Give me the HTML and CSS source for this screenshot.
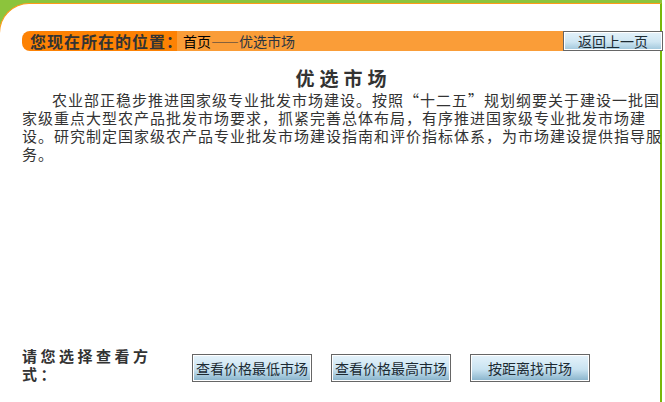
FILE: index.html
```html
<!DOCTYPE html>
<html lang="zh-CN">
<head>
<meta charset="utf-8">
<title>优选市场</title>
<link rel="stylesheet" href="styles.css">
</head>
<body>
<div class="frame">
  <div class="panel">
    <div class="crumb">
      <div class="crumb-label">您现在所在的位置：</div>
      <div class="crumb-path"><span class="home">首页</span>——优选市场</div>
      <button class="btn back">返回上一页</button>
    </div>
    <div class="intro">
      <h1 class="title">优选市场</h1>
      <p class="text">农业部正稳步推进国家级专业批发市场建设。按照<span class="q">“</span>十二五<span class="q">”</span>规划纲要关于建设一批国家级重点大型农产品批发市场要求，抓紧完善总体布局，有序推进国家级专业批发市场建设。研究制定国家级农产品专业批发市场建设指南和评价指标体系，为市场建设提供指导服务。</p>
    </div>
    <div class="choose">
      <div class="choose-label">请您选择查看方式：</div>
      <div class="choose-btns">
        <button class="btn big">查看价格最低市场</button>
        <button class="btn big">查看价格最高市场</button>
        <button class="btn big">按距离找市场</button>
      </div>
    </div>
  </div>
</div>
</body>
</html>
```
FILE: styles.css
```css
html, body {
  margin: 0;
  padding: 0;
  background: #ffffff;
  font-family: "Noto Sans CJK SC", "Noto Sans", sans-serif;
  color: #333333;
}
.frame {
  width: 662px;
  padding-top: 3px;
  background: #8cc43c;
  overflow: visible;
}
.panel {
  margin-left: -1px;
  width: 638px;
  min-height: 399px;
  padding-left: 22px;
  background: #ffffff;
  border-top: 1px solid #ff9a1a;
  border-left: 1px solid #ff9a1a;
  border-right: 2px solid #79b80a;
  border-top-left-radius: 30px;
}
.crumb {
  display: flex;
  width: 641px;
  height: 20px;
  margin-top: 27px;
}
.crumb-label {
  width: 147px;
  padding-left: 8px;
  background: #fd8204;
  border-radius: 8px 0 0 8px;
  font-weight: bold;
  font-size: 16px;
  letter-spacing: 1px;
  line-height: 20px;
  color: #333333;
  white-space: nowrap;
}
.crumb-path {
  flex: 1;
  padding-left: 6px;
  background: #fa9d38;
  font-size: 14px;
  line-height: 20px;
  color: #2b3440;
  white-space: nowrap;
}
.crumb-path .home {
  color: #000000;
}
.btn {
  font-family: "Noto Sans CJK SC", "Noto Sans", sans-serif;
  border: 1px solid #666666;
  box-shadow: inset 0 0 0 1px #ffffff;
  background: linear-gradient(#e4f2fa, #cfe6f2 55%, #9fc6db);
  color: #1c2a33;
  padding: 0;
  margin: 0;
  cursor: pointer;
}
.back {
  width: 100px;
  height: 20px;
  font-size: 14px;
  line-height: 16px;
}
.intro {
  height: 282px;
  padding-top: 14px;
}
.title {
  margin: 0;
  text-align: center;
  font-size: 19px;
  line-height: 26px;
  font-weight: bold;
  letter-spacing: 5px;
  color: #333333;
  padding-left: 5px;
}
.text {
  margin: 0;
  width: 641px;
  font-size: 15px;
  letter-spacing: 1px;
  line-height: 18px;
  text-indent: 30px;
  color: #333333;
}
.q {
  font-feature-settings: "fwid";
}
.choose {
  display: flex;
  align-items: flex-start;
}
.choose-label {
  width: 140px;
  margin-right: 30px;
  font-size: 15px;
  font-weight: bold;
  letter-spacing: 3.5px;
  line-height: 18px;
  color: #333333;
}
.choose-btns {
  display: flex;
  gap: 19px;
  margin-top: 7px;
}
.big {
  width: 120px;
  height: 28px;
  font-size: 14px;
  background: linear-gradient(#e6f3fb, #c9e3f1 55%, #86b2ca);
}
```
